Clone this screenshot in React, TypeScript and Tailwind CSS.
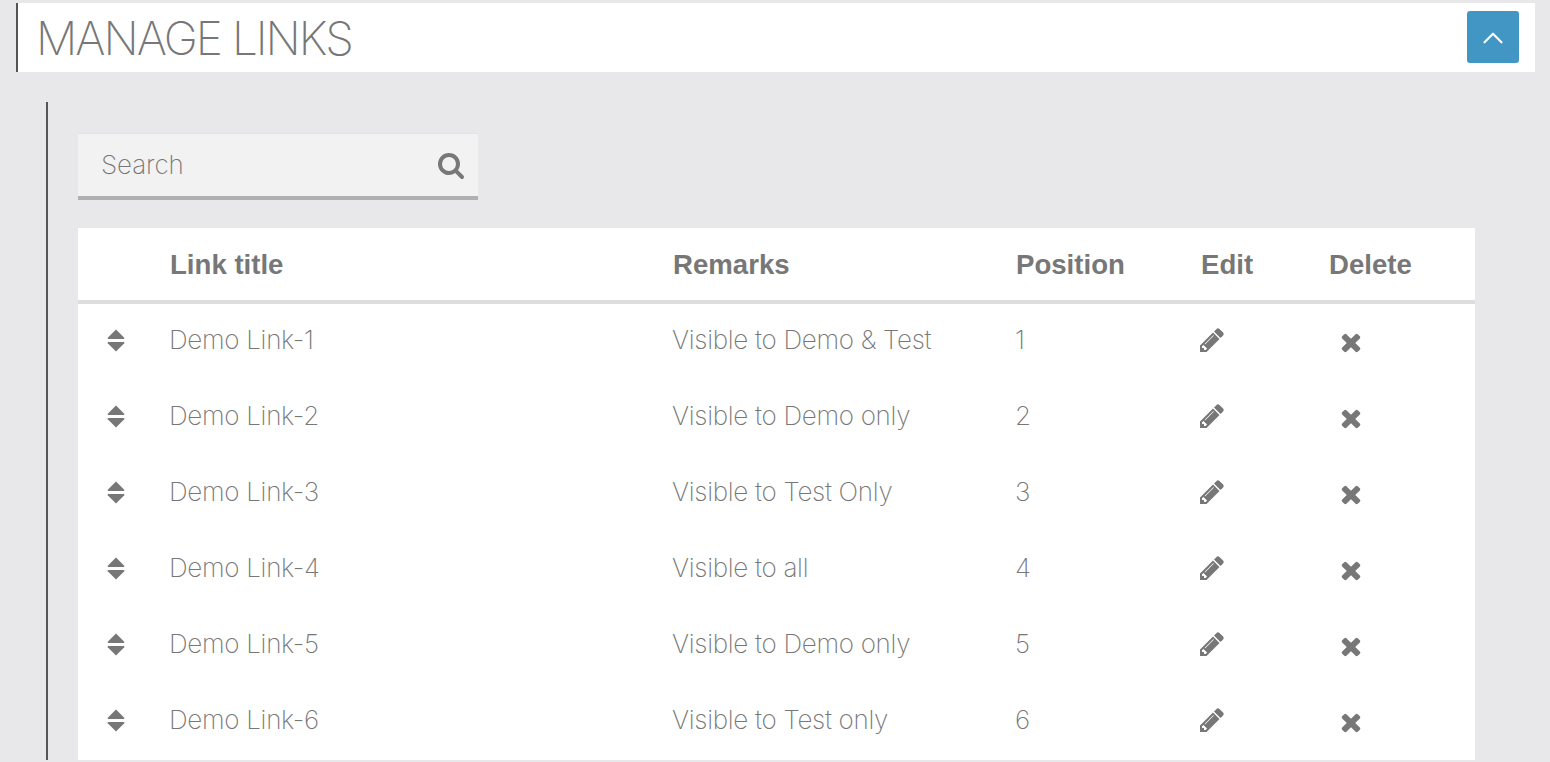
import { ChevronUp } from 'lucide-react'

const rows = [
  { title: 'Demo Link-1', remarks: 'Visible to Demo & Test', position: 1 },
  { title: 'Demo Link-2', remarks: 'Visible to Demo only', position: 2 },
  { title: 'Demo Link-3', remarks: 'Visible to Test Only', position: 3 },
  { title: 'Demo Link-4', remarks: 'Visible to all', position: 4 },
  { title: 'Demo Link-5', remarks: 'Visible to Demo only', position: 5 },
  { title: 'Demo Link-6', remarks: 'Visible to Test only', position: 6 },
]

const gridCols = 'grid grid-cols-[92px_503px_343px_185px_128px_1fr] items-center'

function SearchIcon() {
  return (
    <svg viewBox="0 0 1792 1792" className="w-[28px] h-[28px] fill-[#777]">
      <path d="M1216 832q0-185-131.500-316.500t-316.500-131.500-316.500 131.500-131.500 316.500 131.500 316.500 316.500 131.500 316.500-131.500 131.500-316.500zm512 832q0 52-38 90t-90 38q-54 0-90-38l-343-342q-179 124-399 124-143 0-273.500-55.500t-225-150-150-225-55.500-273.500 55.500-273.500 150-225 225-150 273.500-55.500 273.500 55.500 225 150 150 225 55.500 273.500q0 220-124 399l343 343q37 37 37 90z" />
    </svg>
  )
}

function PencilIcon() {
  return (
    <svg viewBox="0 0 1792 1792" className="w-[28px] h-[28px] fill-[#777]">
      <path d="M491 1536l91-91-235-235-91 91v107h128v128h107zm523-928q0-22-22-22-10 0-17 7l-542 542q-7 7-7 17 0 22 22 22 10 0 17-7l542-542q7-7 7-17zm-54-192l416 416-832 832h-416v-416zm683 96q0 53-37 90l-166 166-416-416 166-165q36-38 90-38 53 0 91 38l235 234q37 39 37 91z" />
    </svg>
  )
}

function CloseIcon() {
  return (
    <svg viewBox="0 0 1792 1792" className="w-[28px] h-[28px] fill-[#777]">
      <path d="M1490 1322q0 40-28 68l-136 136q-28 28-68 28t-68-28l-294-294-294 294q-28 28-68 28t-68-28l-136-136q-28-28-28-68t28-68l294-294-294-294q-28-28-28-68t28-68l136-136q28-28 68-28t68 28l294 294 294-294q28-28 68-28t68 28l136 136q28 28 28 68t-28 68l-294 294 294 294q28 28 28 68z" />
    </svg>
  )
}

function SortIcon() {
  return (
    <svg viewBox="0 0 18 24" className="w-[18px] h-[23px] fill-[#777]">
      <path d="M9 0.5 17.6 9.2Q18 10.5 16.8 10.5H1.2Q0 10.5 0.4 9.2Z" />
      <path d="M9 23.5 17.6 14.8Q18 13.500 16.800 13.500H1.200Q0 13.500 0.400 14.800Z" />
    </svg>
  )
}

export default function App() {
  return (
    <div className="h-[762px] overflow-hidden bg-[#e8e8ea] pt-[3px] pl-4 pr-[15px] font-['Inter',sans-serif] font-extralight text-[#777]">
      {/* header */}
      <div className="h-[69px] flex items-center justify-between bg-white border-l-2 border-[#555] pl-[18px] pr-4">
        <h1 className="text-[46px] font-extralight leading-none tracking-[-2px]">MANAGE LINKS</h1>
        <button className="w-[52px] h-[52px] -mt-px pt-px rounded-[3px] bg-[#4296c4] flex items-center justify-center text-white">
          <ChevronUp className="w-[34px] h-[34px]" strokeWidth={1.5} />
        </button>
      </div>

      <div className="mt-[30px] ml-[30px] border-l-2 border-[#555] pl-[30px] pr-[60px] pt-[31px]">
        {/* search */}
        <div className="w-[400px] h-[67px] bg-[#f2f2f2] border-t border-[#e3e3e3] border-b-4 border-b-[#b0b0b0] pl-[23px] pr-[13px] flex items-center justify-between">
          <span className="-mt-[2px] text-[26px] tracking-[-0.1px]">Search</span>
          <SearchIcon />
        </div>

        {/* table */}
        <div className="mt-7 bg-white">
          <div className={`${gridCols} h-[76px] pt-px border-b-4 border-[#ddd] text-[27.6px] font-bold font-['Liberation_Sans',sans-serif]`}>
            <span />
            <span>Link title</span>
            <span>Remarks</span>
            <span>Position</span>
            <span>Edit</span>
            <span>Delete</span>
          </div>
          {rows.map((row) => (
            <div key={row.position} className={`${gridCols} h-[76px] text-[26px] tracking-[-0.3px]`}>
              <span className="pl-[29px] -mt-1 flex"><SortIcon /></span>
              <span className="-mt-[5px] -ml-px">{row.title}</span>
              <span className="-mt-[5px] -ml-px">{row.remarks}</span>
              <span className="-mt-[5px] -ml-px">{row.position}</span>
              <span className="-ml-[3px] -mt-1 flex"><PencilIcon /></span>
              <span className="pl-2 flex"><CloseIcon /></span>
            </div>
          ))}
        </div>
      </div>
    </div>
  )
}
